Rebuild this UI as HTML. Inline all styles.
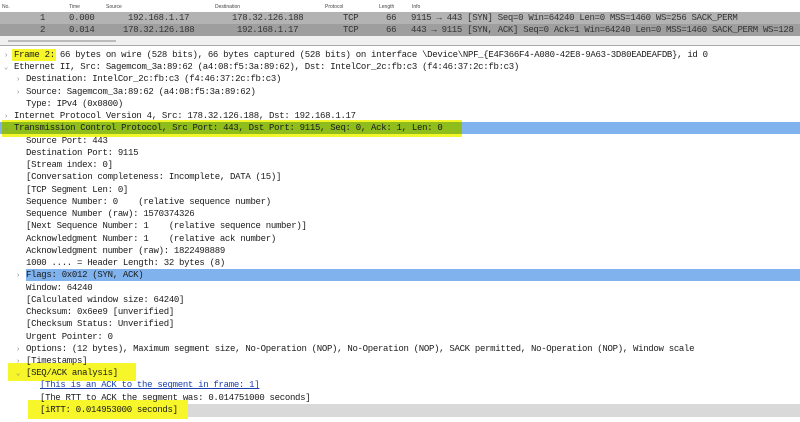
<!DOCTYPE html>
<html><head><style>
body{margin:0;width:800px;height:422px;background:#fff;overflow:hidden;position:relative;font-family:"Liberation Mono",monospace;font-size:9px;letter-spacing:-0.3px;color:#1a1a1a}
.a{position:absolute;white-space:pre}
.hdr{position:absolute;top:0;left:0;width:800px;height:12px;background:#fff;border-bottom:1px solid #ddd;font-family:"Liberation Sans",sans-serif;font-size:5px;letter-spacing:0;color:#444}
.hdr span{position:absolute;top:4px}
.row{position:absolute;left:0;width:800px;height:12px;line-height:12px;color:#333}
.row span{position:absolute;top:0}
.ar{position:absolute;color:#888;font-size:7px}
</style></head><body>
<div style="position:absolute;top:0;left:0;width:800px;height:2px;background:#999"></div>
<div class="hdr"><span style="left:2px">No.</span><span style="left:69px">Time</span><span style="left:106px">Source</span><span style="left:215px">Destination</span><span style="left:325px">Protocol</span><span style="left:379px">Length</span><span style="left:412px">Info</span></div>
<div class="row" style="top:12px;background:#b3b3b3"><span style="left:40px">1</span><span style="left:69px">0.000</span><span style="left:128px">192.168.1.17</span><span style="left:232px">178.32.126.188</span><span style="left:343px">TCP</span><span style="left:386px">66</span><span style="left:411px">9115 → 443 [SYN] Seq=0 Win=64240 Len=0 MSS=1460 WS=256 SACK_PERM</span></div>
<div class="row" style="top:24px;background:#9e9e9e"><span style="left:40px">2</span><span style="left:69px">0.014</span><span style="left:123px">178.32.126.188</span><span style="left:237px">192.168.1.17</span><span style="left:343px">TCP</span><span style="left:386px">66</span><span style="left:411px">443 → 9115 [SYN, ACK] Seq=0 Ack=1 Win=64240 Len=0 MSS=1460 SACK_PERM WS=128</span></div>
<div style="position:absolute;top:36px;left:0;width:800px;height:9px;background:#f0f0f0"></div>
<div style="position:absolute;top:40px;left:8px;width:108px;height:2px;background:#bbb"></div>
<div style="position:absolute;top:45px;left:0;width:800px;height:1px;background:#aaa"></div>

<div style="position:absolute;top:49px;left:12px;width:44px;height:12px;background:#f6f62a"></div>
<div style="position:absolute;top:122px;left:0;width:800px;height:12px;background:#80b3ee"></div>
<div style="position:absolute;top:120px;left:2px;width:460px;height:17px;background:#f2f52a"></div>
<div style="position:absolute;top:122px;left:2px;width:460px;height:12px;background:#8fbd1c"></div>
<div style="position:absolute;top:269px;left:26px;width:774px;height:12px;background:#80b3ee"></div>
<div style="position:absolute;top:404px;left:180px;width:620px;height:13px;background:#d9d9d9"></div>
<div style="position:absolute;top:363px;left:8px;width:128px;height:18px;background:#f6f62a"></div>
<div style="position:absolute;top:400px;left:28px;width:160px;height:19px;background:#f6f62a"></div>

<div id="t"></div>
<script>
var L=[
[0,'>',"Frame 2: 66 bytes on wire (528 bits), 66 bytes captured (528 bits) on interface \\Device\\NPF_{E4F366F4-A080-42E8-9A63-3D80EADEAFDB}, id 0"],
[0,'v',"Ethernet II, Src: Sagemcom_3a:89:62 (a4:08:f5:3a:89:62), Dst: IntelCor_2c:fb:c3 (f4:46:37:2c:fb:c3)"],
[1,'>',"Destination: IntelCor_2c:fb:c3 (f4:46:37:2c:fb:c3)"],
[1,'>',"Source: Sagemcom_3a:89:62 (a4:08:f5:3a:89:62)"],
[1,'',"Type: IPv4 (0x0800)"],
[0,'>',"Internet Protocol Version 4, Src: 178.32.126.188, Dst: 192.168.1.17"],
[0,'v',"Transmission Control Protocol, Src Port: 443, Dst Port: 9115, Seq: 0, Ack: 1, Len: 0"],
[1,'',"Source Port: 443"],
[1,'',"Destination Port: 9115"],
[1,'',"[Stream index: 0]"],
[1,'',"[Conversation completeness: Incomplete, DATA (15)]"],
[1,'',"[TCP Segment Len: 0]"],
[1,'',"Sequence Number: 0    (relative sequence number)"],
[1,'',"Sequence Number (raw): 1570374326"],
[1,'',"[Next Sequence Number: 1    (relative sequence number)]"],
[1,'',"Acknowledgment Number: 1    (relative ack number)"],
[1,'',"Acknowledgment number (raw): 1822498889"],
[1,'',"1000 .... = Header Length: 32 bytes (8)"],
[1,'>',"Flags: 0x012 (SYN, ACK)"],
[1,'',"Window: 64240"],
[1,'',"[Calculated window size: 64240]"],
[1,'',"Checksum: 0x6ee9 [unverified]"],
[1,'',"[Checksum Status: Unverified]"],
[1,'',"Urgent Pointer: 0"],
[1,'>',"Options: (12 bytes), Maximum segment size, No-Operation (NOP), No-Operation (NOP), SACK permitted, No-Operation (NOP), Window scale"],
[1,'>',"[Timestamps]"],
[1,'v',"[SEQ/ACK analysis]"],
[2,'',"[This is an ACK to the segment in frame: 1]"],
[2,'',"[The RTT to ACK the segment was: 0.014751000 seconds]"],
[2,'',"[iRTT: 0.014953000 seconds]"]];
var h='';
L.forEach(function(e,i){var y=49+i*12.24;var x=[14,26,40][e[0]];
if(e[1])h+='<div class="a ar" style="top:'+(y+1)+'px;left:'+(x-10)+'px;line-height:12px">'+(e[1]=='v'?'⌄':'›')+'</div>';
var st=(i==27)?'color:#1a3fb0;text-decoration:underline;':'';
h+='<div class="a" style="top:'+y+'px;left:'+x+'px;line-height:12px;'+st+'">'+e[2].replace(/&/g,'&amp;').replace(/</g,'&lt;')+'</div>';});
document.getElementById('t').innerHTML=h;
</script>
</body></html>
